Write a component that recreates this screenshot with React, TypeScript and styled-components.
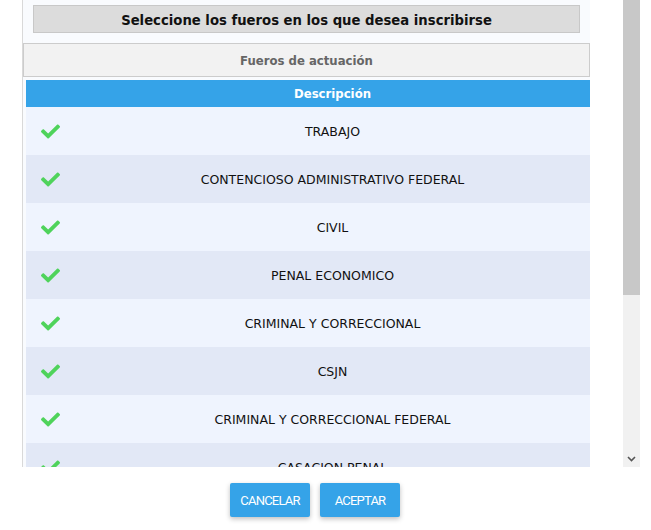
import React from "react";
import styled, { createGlobalStyle } from "styled-components";
import { FaCheck } from "react-icons/fa";

const Global = createGlobalStyle`
  html, body { margin: 0; padding: 0; background: #ffffff; }
  body { font-family: "DejaVu Sans Condensed", "DejaVu Sans", sans-serif; }
`;

const Page = styled.div`
  width: 651px;
  height: 530px;
  display: flex;
  flex-direction: column;
  background: #ffffff;
`;

const ScrollRow = styled.div`
  display: flex;
  height: 467px;
`;

const Viewport = styled.div`
  width: 623px;
  height: 467px;
  overflow: hidden;
`;

const Panel = styled.div`
  margin-left: 22px;
  width: 568px;
  min-height: 100%;
  background: #f9fbfe;
  border-left: 1px solid #d9d9d9;
  box-sizing: border-box;
  padding-top: 5px;
  display: flex;
  flex-direction: column;
`;

const Title = styled.div`
  margin: 0 10px 0 10px;
  height: 28px;
  box-sizing: border-box;
  background: #dcdcdc;
  border: 1px solid #c8c8c8;
  display: flex;
  align-items: center;
  justify-content: center;
  font-weight: bold;
  font-size: 14.7px;
  color: #111;
`;

const SubTitle = styled.div`
  margin-top: 10px;
  height: 34px;
  box-sizing: border-box;
  background: #f2f2f2;
  border: 1px solid #cccccc;
  display: flex;
  align-items: center;
  justify-content: center;
  font-weight: bold;
  font-size: 13px;
  color: #666666;
`;

const Table = styled.div`
  margin-top: 3px;
  margin-left: 3px;
  display: flex;
  flex-direction: column;
`;

const Row = styled.div<{ $alt?: boolean; $head?: boolean }>`
  display: grid;
  grid-template-columns: 49px 1fr;
  align-items: center;
  height: ${(p) => (p.$head ? "27px" : "48px")};
  background: ${(p) => (p.$head ? "#35a3e8" : p.$alt ? "#e2e8f6" : "#eff4fe")};
  color: ${(p) => (p.$head ? "#ffffff" : "#111111")};
  font-family: ${(p) =>
    p.$head ? '"DejaVu Sans Condensed", sans-serif' : '"DejaVu Sans", sans-serif'};
  font-weight: ${(p) => (p.$head ? "bold" : "normal")};
  font-size: ${(p) => (p.$head ? "13px" : "12.5px")};
  flex-shrink: 0;
`;

const IconCell = styled.div`
  display: flex;
  justify-content: center;
  color: #4fd35b;
`;

const TextCell = styled.div`
  text-align: center;
`;

const ScrollBar = styled.div`
  width: 17px;
  height: 467px;
  background: #f1f1f1;
  display: flex;
  flex-direction: column;
`;

const Thumb = styled.div`
  height: 295px;
  background: #c8c8c8;
`;

const Track = styled.div`
  flex: 1;
`;

const Arrow = styled.div`
  height: 17px;
  display: flex;
  align-items: center;
  justify-content: center;
`;

const Footer = styled.div`
  width: 630px;
  display: flex;
  justify-content: center;
  gap: 10px;
  padding-top: 16px;
`;

const Button = styled.button`
  width: 80px;
  height: 34px;
  border: none;
  border-radius: 2px;
  background: #35a3e8;
  color: #ffffff;
  font-family: Roboto, "Liberation Sans", sans-serif;
  font-size: 13px;
  letter-spacing: -0.8px;
  box-shadow: 0 2px 5px rgba(0, 0, 0, 0.25);
  padding: 0;
`;

const items = [
  "TRABAJO",
  "CONTENCIOSO ADMINISTRATIVO FEDERAL",
  "CIVIL",
  "PENAL ECONOMICO",
  "CRIMINAL Y CORRECCIONAL",
  "CSJN",
  "CRIMINAL Y CORRECCIONAL FEDERAL",
  "CASACION PENAL",
];

export default function App() {
  return (
    <Page>
      <Global />
      <ScrollRow>
        <Viewport>
          <Panel>
            <Title>Seleccione los fueros en los que desea inscribirse</Title>
            <SubTitle>Fueros de actuación</SubTitle>
            <Table>
              <Row $head>
                <div />
                <TextCell>Descripción</TextCell>
              </Row>
              {items.map((t, i) => (
                <Row key={t} $alt={i % 2 === 1}>
                  <IconCell>
                    <FaCheck size={19} />
                  </IconCell>
                  <TextCell>{t}</TextCell>
                </Row>
              ))}
            </Table>
          </Panel>
        </Viewport>
        <ScrollBar>
          <Thumb />
          <Track />
          <Arrow>
            <svg width="9" height="6" viewBox="0 0 9 6">
              <path d="M1 1 L4.5 4.5 L8 1" stroke="#555" strokeWidth="1.6" fill="none" />
            </svg>
          </Arrow>
        </ScrollBar>
      </ScrollRow>
      <Footer>
        <Button>CANCELAR</Button>
        <Button>ACEPTAR</Button>
      </Footer>
    </Page>
  );
}
